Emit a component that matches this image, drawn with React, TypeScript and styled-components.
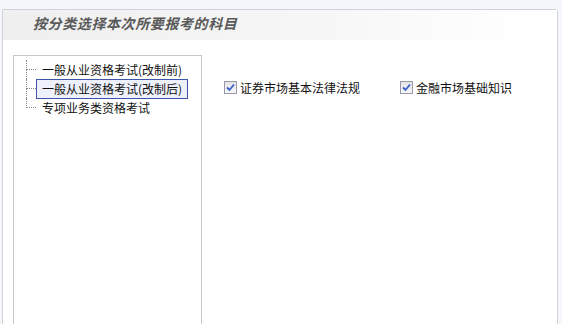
import React, { useState } from "react";
import styled, { createGlobalStyle } from "styled-components";

const GlobalStyle = createGlobalStyle`
  html, body {
    margin: 0;
    padding: 0;
    background: #f3f7fb;
    overflow: hidden;
  }
  body {
    font-family: "Liberation Sans", "Noto Sans CJK SC", sans-serif;
  }
`;

const categories = ["一般从业资格考试(改制前)", "一般从业资格考试(改制后)", "专项业务类资格考试"];

const subjects = [
  { name: "证券市场基本法律法规", checked: true },
  { name: "金融市场基础知识", checked: true },
];

const App = () => {
  const [selected, setSelected] = useState(1);
  const [checks, setChecks] = useState(subjects.map((s) => s.checked));

  return (
    <>
      <GlobalStyle />
      <Page>
        <Card>
          <Header>
            <Title>按分类选择本次所要报考的科目</Title>
          </Header>
          <Body>
            <TreePanel>
              <Tree>
                {categories.map((c, i) => (
                  <TreeRow key={c}>
                    <Connector>
                      <Upper />
                      <Lower $last={i === categories.length - 1} />
                    </Connector>
                    <Label $active={i === selected} onClick={() => setSelected(i)}>
                      {c}
                    </Label>
                  </TreeRow>
                ))}
              </Tree>
            </TreePanel>
            <Subjects>
              {subjects.map((s, i) => (
                <Subject key={s.name}>
                  <CheckBox
                    $checked={checks[i]}
                    onClick={() => setChecks(checks.map((v, j) => (j === i ? !v : v)))}
                  >
                    {checks[i] && (
                      <svg width="9" height="9" viewBox="0 0 9 9">
                        <path d="M1 4.5 L3.5 7 L8 1.5" fill="none" stroke="#3a5fc4" strokeWidth="1.8" />
                      </svg>
                    )}
                  </CheckBox>
                  <SubjectName>{s.name}</SubjectName>
                </Subject>
              ))}
            </Subjects>
          </Body>
        </Card>
      </Page>
    </>
  );
};

export default App;

const Page = styled.div`
  padding: 9px 4px 0 2px;
  height: 324px;
  box-sizing: border-box;
  overflow: hidden;
`

const Card = styled.div`
  background: #fff;
  border: 1px solid #d2d2da;
  border-top-right-radius: 3px;
  height: 340px;
`

const Header = styled.div`
  height: 30px;
  display: flex;
  align-items: center;
  padding-left: 30px;
  background: linear-gradient(to right, #efefef 0%, #f7f7f7 60%, #ffffff 95%);
`

const Title = styled.div`
  font-family: "Noto Sans CJK SC", sans-serif;
  font-size: 14px;
  font-weight: bold;
  font-style: italic;
  letter-spacing: 0.6px;
  color: #5a5a5a;
  line-height: 1;
  margin-top: -4px;
`

const Body = styled.div`
  display: flex;
  padding: 15px 0 0 10px;
`

const TreePanel = styled.div`
  width: 189px;
  height: 290px;
  border: 1px solid #c8c8c8;
  padding: 4px 0 0 12px;
  box-sizing: border-box;
  flex-shrink: 0;
`

const Tree = styled.div`
  display: flex;
  flex-direction: column;
`

const TreeRow = styled.div`
  display: flex;
  align-items: stretch;
  height: 19px;
`

const Connector = styled.div`
  width: 10px;
  display: flex;
  flex-direction: column;
  flex-shrink: 0;
`

const Upper = styled.div`
  height: 10px;
  border-left: 1px dotted #8a8a8a;
  border-bottom: 1px dotted #8a8a8a;
  box-sizing: border-box;
`

const Lower = styled.div<{ $last: boolean }>`
  flex: 1;
  border-left: 1px dotted ${(p) => (p.$last ? "transparent" : "#8a8a8a")};
`

const Label = styled.div<{ $active: boolean }>`
  font-family: "Noto Sans CJK SC", sans-serif;
  font-size: 12px;
  color: #111;
  line-height: 18px;
  height: 20px;
  box-sizing: border-box;
  padding: 0 5px;
  margin-top: -0.5px;
  white-space: nowrap;
  cursor: pointer;
  border: 1px solid ${(p) => (p.$active ? "#3f55a8" : "transparent")};
  background: ${(p) => (p.$active ? "#eef0fb" : "transparent")};
`

const Subjects = styled.div`
  display: flex;
  padding: 24px 0 0 22px;
  align-self: flex-start;
`

const Subject = styled.label`
  display: flex;
  align-items: center;
  width: 176px;
  cursor: pointer;
`

const CheckBox = styled.span<{ $checked: boolean }>`
  width: 11px;
  height: 11px;
  border: 1px solid #9a9aa6;
  background: linear-gradient(#e4e4ea, #f6f6f8);
  display: flex;
  align-items: center;
  justify-content: center;
  margin-right: 3px;
`

const SubjectName = styled.span`
  font-family: "Noto Sans CJK SC", sans-serif;
  font-size: 12px;
  color: #111;
  white-space: nowrap;
`
